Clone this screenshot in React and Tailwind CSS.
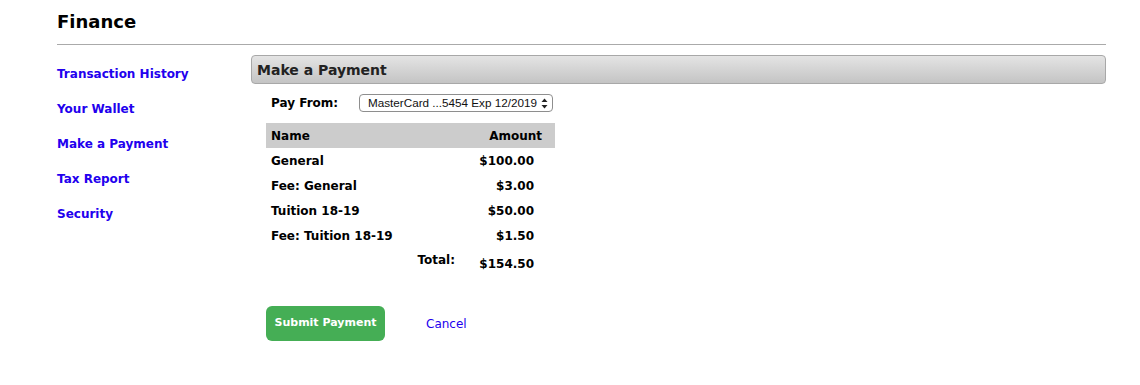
export default function App() {
  const rows = [
    ["General", "$100.00"],
    ["Fee: General", "$3.00"],
    ["Tuition 18-19", "$50.00"],
    ["Fee: Tuition 18-19", "$1.50"],
  ];
  const links = ["Transaction History", "Your Wallet", "Make a Payment", "Tax Report", "Security"];
  return (
    <div className="w-[1140px] h-[385px] bg-white pl-[57px] pr-[34px] text-black" style={{ fontFamily: '"DejaVu Sans", Verdana, sans-serif' }}>
      <div className="pt-[10px] h-[44px] text-[18px] font-bold leading-[24px]">Finance</div>
      <div className="h-px bg-[#aaaaaa]" />
      <div className="flex mt-[10px]">
        <div className="w-[194px] flex flex-col pt-[1px]">
          {links.map((l) => (
            <div key={l} className="h-[35px] flex items-center text-[12px] font-bold text-[#2200ee]">
              {l}
            </div>
          ))}
        </div>
        <div className="flex-1">
          <div className="h-[29px] rounded-[4px] border border-[#a8a8a8] bg-gradient-to-b from-[#e4e4e4] to-[#c4c4c4] flex items-center pl-[5px] pt-[2px] text-[14px] font-bold text-[#222]">
            Make a Payment
          </div>
          <div className="pl-[15px]">
            <div className="flex items-center mt-[10px] h-[18px] pl-[5px]">
              <div className="w-[88px] text-[12px] font-bold">Pay From:</div>
              <div
                className="w-[194px] h-[18px] border border-[#8e8e8e] rounded-[4px] flex items-center justify-between pl-[8px] pr-[4px] text-[11.7px] text-[#111] whitespace-nowrap"
                style={{ fontFamily: '"Liberation Sans", Arial, sans-serif' }}
              >
                <span>MasterCard ...5454 Exp 12/2019</span>
                <svg width="7" height="11" viewBox="0 0 7 11">
                  <path d="M3.5 0.5 L6.5 4 L0.5 4 Z" fill="#222" />
                  <path d="M3.5 10.5 L6.5 7 L0.5 7 Z" fill="#222" />
                </svg>
              </div>
            </div>
            <div className="w-[289px] mt-[11px] text-[12px] font-bold">
              <div className="h-[25px] bg-[#cccccc] flex items-center justify-between pl-[5px] pr-[13px]">
                <span>Name</span>
                <span>Amount</span>
              </div>
              {rows.map(([n, a]) => (
                <div key={n} className="h-[25px] flex items-center justify-between pl-[5px] pr-[21px]">
                  <span>{n}</span>
                  <span>{a}</span>
                </div>
              ))}
              <div className="h-[27px] flex justify-end pr-[21px]">
                <span className="mt-[3px]">Total:</span>
                <span className="w-[79px] text-right mt-[7px]">$154.50</span>
              </div>
            </div>
            <div className="flex items-center mt-[31px]">
              <div className="w-[119px] h-[35px] rounded-[6px] bg-[#45ae55] flex items-center justify-center text-white text-[11px] font-bold">
                Submit Payment
              </div>
              <div className="ml-[41px] text-[12px] text-[#2200ee]">Cancel</div>
            </div>
          </div>
        </div>
      </div>
    </div>
  );
}
